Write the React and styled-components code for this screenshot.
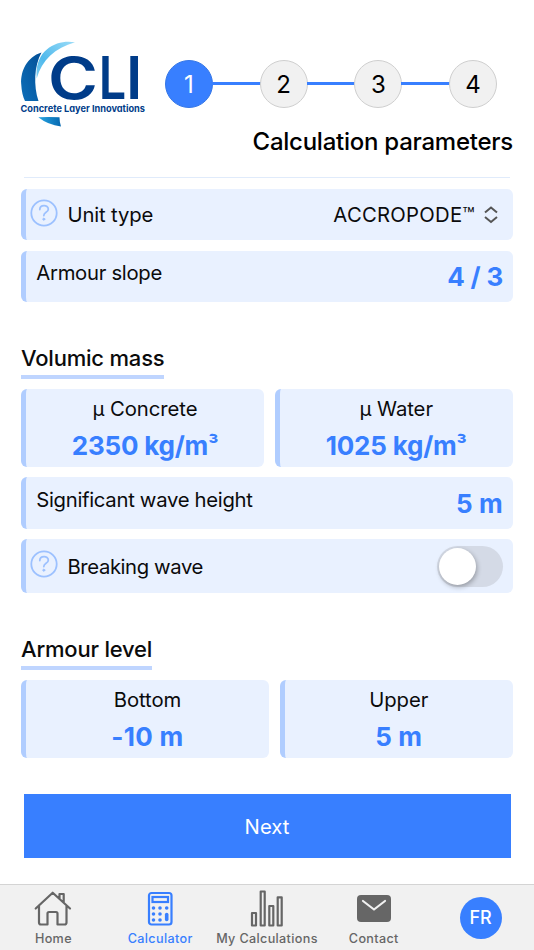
import React from "react";
import styled, { createGlobalStyle } from "styled-components";

const Global = createGlobalStyle`
  * { box-sizing: border-box; }
  body { margin: 0; background: #fff; font-family: Inter, "Liberation Sans", sans-serif; color: #0b0b0c; }
`;

const Screen = styled.div`
  width: 534px;
  height: 950px;
  display: flex;
  flex-direction: column;
  overflow: hidden;
  background: #fff;
`;

const Text = styled.span`
  font-size: ${(p) => p.$size || 20.3}px;
  font-weight: ${(p) => p.$weight || 400};
  letter-spacing: ${(p) => p.$track || 0}px;
  line-height: ${(p) => p.$line || 26}px;
  color: ${(p) => p.$color || "inherit"};
  white-space: nowrap;
`;

const Power = styled.span`
  font-size: 0.84em;
  line-height: 0;
  vertical-align: 3px;
`;

const Header = styled.header`
  height: 177px;
  flex: none;
  display: flex;
  padding: 40px 21px 0 20px;
`;

const Logo = styled.svg`
  width: 128px;
  height: 90px;
  flex: none;
`;

const LogoCaption = styled.text`
  font-size: 9.3px;
  font-weight: 700;
  font-feature-settings: "cv11";
`;

const HeaderMain = styled.div`
  flex: 1;
  display: flex;
  flex-direction: column;
  padding-top: 20px;
`;

const Steps = styled.div`
  display: flex;
  align-items: center;
  padding: 0 16px 0 17px;
`;

const StepDot = styled.div`
  width: 48px;
  height: 48px;
  flex: none;
  border-radius: 50%;
  display: flex;
  align-items: center;
  justify-content: center;
  font-size: 24px;
  color: ${(p) => (p.$active ? "#fff" : "#000")};
  background: ${(p) => (p.$active ? "#387fff" : "#f1f1f1")};
  border: 1px solid ${(p) => (p.$active ? "#3677e6" : "#cfcfcf")};
`;

const StepLine = styled.div`
  flex: 1;
  height: 3px;
  margin: 0 -1px 1px;
  background: #387fff;
`;

const PageTitle = styled.h1`
  margin: 18px 0 0;
  display: flex;
  justify-content: flex-end;
  font-weight: 500;
  color: #000;
`;

const Content = styled.main`
  flex: none;
  height: 707px;
  padding: 0 21px;
  display: flex;
  flex-direction: column;
`;

const ScrollEdge = styled.div`
  height: 1px;
  flex: none;
  margin: 0 3px 11px;
  background: #e0ebfb;
`;

const Panel = styled.div`
  display: flex;
  flex: none;
  align-items: center;
  justify-content: space-between;
  height: ${(p) => p.$height || 51.4}px;
  margin-bottom: 10.5px;
  padding: 0 10px 0 ${(p) => (p.$help ? 3.5 : 10.3)}px;
  border-left: 5px solid #b0cdff;
  border-radius: 6px;
  background: #e9f1ff;
`;

const Lead = styled.div`
  display: flex;
  align-items: center;
  gap: 10px;
  padding-bottom: ${(p) => p.$lift || 0}px;
`;

const HelpIcon = styled.svg`
  width: 28px;
  height: 28px;
  margin-top: -4px;
`;

const Select = styled.div`
  display: flex;
  align-items: center;
  gap: 8px;
  padding-right: 4px;
`;

const SectionTitle = styled.h2`
  align-self: flex-start;
  display: flex;
  flex: none;
  margin: 31.3px 0 10.4px;
  padding: 0 0 3px;
  border-bottom: 4px solid #bfd5ff;
  font-weight: 500;
`;

const Cards = styled.div`
  display: grid;
  flex: none;
  grid-template-columns: ${(p) => p.$cols};
  gap: 10.5px;
  margin-bottom: 10.2px;
`;

const Card = styled.div`
  height: 77.7px;
  padding-top: 6.5px;
  display: flex;
  flex-direction: column;
  align-items: center;
  border-left: 5px solid #b0cdff;
  border-radius: 6px;
  background: #e9f1ff;
`;

const Toggle = styled.div`
  width: 66px;
  height: 41px;
  padding: 2px;
  border-radius: 21px;
  background: #d4dae6;
`;

const Knob = styled.div`
  width: 37px;
  height: 37px;
  border-radius: 50%;
  background: #fff;
  box-shadow: 1px 2px 5px rgba(0, 0, 0, 0.3);
`;

const NextButton = styled.button`
  height: 64px;
  flex: none;
  margin: 26px 2.5px 0;
  padding: 1px 0 0;
  border: 0;
  background: #387fff;
  color: #fff;
  font-family: inherit;
`;

const TabBar = styled.nav`
  height: 66px;
  flex: none;
  display: grid;
  grid-template-columns: repeat(5, 1fr);
  border-top: 1px solid #d4d4d4;
  background: #f1f1f1;
`;

const Tab = styled.div`
  display: flex;
  flex-direction: column;
  align-items: center;
  padding-top: 5px;
  color: ${(p) => (p.$active ? "#387fff" : "#666")};
`;

const TabIcon = styled.svg`
  width: 40px;
  height: 40px;
  flex: none;
  fill: none;
  stroke: currentColor;
  stroke-width: 2.2;
  stroke-linejoin: round;
  stroke-linecap: round;
`;

const Avatar = styled.div`
  width: 42px;
  height: 42px;
  margin-top: 7px;
  border-radius: 50%;
  display: flex;
  align-items: center;
  justify-content: center;
  background: #387fff;
  color: #fff;
`;

function Brand() {
  return (
    <Logo viewBox="20 40 128 90" aria-label="CLI Concrete Layer Innovations">
      <defs>
        <linearGradient id="deep" x1="0" y1="1" x2="1" y2="0">
          <stop offset="0" stopColor="#0d6fb9" />
          <stop offset="1" stopColor="#034e96" />
        </linearGradient>
        <linearGradient id="pale" x1="0" y1="1" x2="1" y2="0">
          <stop offset="0" stopColor="#7fcdf2" />
          <stop offset=".35" stopColor="#4fb9ec" />
          <stop offset="1" stopColor="#9bdcf8" />
        </linearGradient>
        <linearGradient id="base">
          <stop offset="0" stopColor="#26a5e2" />
          <stop offset="1" stopColor="#0668b0" />
        </linearGradient>
      </defs>
      <path d="M41.5 52.5C27 57 20.5 71 21.2 84C21.5 91 23 97 25 101H38.5C33.500 86 34 66 41.5 52.5Z" fill="url(#deep)" />
      <path d="M75 42.3C58 39 34 49 36.700 78.500C42 60 55 48 75 42.300Z" fill="url(#pale)" />
      <path d="M38.300 117.300Q49 116.500 59.500 117.300Q59.500 122 61 126.500Q48 125 38.300 117.300Z" fill="url(#base)" />
      <g fill="#003c89" fontFamily="Inter, sans-serif" fontWeight="600">
        <text x="48" y="98.500" fontSize="58" textLength="50" lengthAdjust="spacingAndGlyphs">C</text>
        <text x="98.800" y="98.500" fontSize="59" textLength="27.500" lengthAdjust="spacingAndGlyphs">L</text>
        <text x="126" y="98.500" fontSize="59">I</text>
        <LogoCaption x="20.500" y="112.300" textLength="124.500" lengthAdjust="spacingAndGlyphs">Concrete Layer Innovations</LogoCaption>
      </g>
    </Logo>
  );
}

function Help() {
  return (
    <HelpIcon viewBox="0 0 28 28" fill="none" stroke="#9cc1ff" strokeWidth="1.800" strokeLinecap="round">
      <circle cx="14" cy="14" r="12.700" />
      <path d="M9.800 10.500C9.800 5.500 18.300 5.500 18.300 10.200C18.300 13.400 13.800 13.300 13.800 16.500" />
      <circle cx="13.800" cy="20.200" r="1" fill="#9cc1ff" strokeWidth="1" />
    </HelpIcon>
  );
}

function Value({ children, line, track = 0 }) {
  return <Text $size={26} $weight={700} $color="#387fff" $line={line} $track={track}>{children}</Text>;
}

function Stat({ label, children, track }) {
  return (
    <Card>
      <Text $track={-0.05}>{label}</Text>
      <Value line={47} track={track}>{children}</Value>
    </Card>
  );
}

function Section({ children }) {
  return (
    <SectionTitle>
      <Text $size={22} $weight={500} $line={28} $track={-0.2}>{children}</Text>
    </SectionTitle>
  );
}

function TabLabel({ children }) {
  return <Text $size={12.6} $weight={500} $line={18} $track={0.35}>{children}</Text>;
}

export default function App() {
  return (
    <Screen>
      <Global />
      <Header>
        <Brand />
        <HeaderMain>
          <Steps>
            {[1, 2, 3, 4].map((n) => (
              <React.Fragment key={n}>
                {n > 1 && <StepLine />}
                <StepDot $active={n === 1}>{n}</StepDot>
              </React.Fragment>
            ))}
          </Steps>
          <PageTitle>
            <Text $size={24} $weight={500} $line={32} $track={-0.25}>Calculation parameters</Text>
          </PageTitle>
        </HeaderMain>
      </Header>

      <Content>
        <ScrollEdge />
        <Panel $help>
          <Lead><Help /><Text $track={-0.15}>Unit type</Text></Lead>
          <Select>
            <Text $track={0.25}>ACCROPODE™</Text>
            <svg width="16" height="18" viewBox="0 0 16 18" fill="none" stroke="#555" strokeWidth="2">
              <path d="M2 6.500L8 1.500L14 6.500M2 11L8 16L14 11" />
            </svg>
          </Select>
        </Panel>
        <Panel>
          <Lead $lift={7}><Text $track={-0.3}>Armour slope</Text></Lead>
          <Value track={-0.2}>4 / 3</Value>
        </Panel>

        <Section>Volumic mass</Section>
        <Cards $cols="243px 1fr">
          <Stat label="µ Concrete" track={-0.2}>2350 kg/m<Power>³</Power></Stat>
          <Stat label="µ Water" track={-0.2}>1025 kg/m<Power>³</Power></Stat>
        </Cards>
        <Panel>
          <Lead $lift={6}><Text $track={-0.3}>Significant wave height</Text></Lead>
          <Value track={0.2} line={27}>5 m</Value>
        </Panel>
        <Panel $help $height={54}>
          <Lead><Help /><Text $track={-0.4} $line={27}>Breaking wave</Text></Lead>
          <Toggle><Knob /></Toggle>
        </Panel>

        <Section>Armour level</Section>
        <Cards $cols="248px 1fr">
          <Stat label="Bottom" track={0.3}>-10 m</Stat>
          <Stat label="Upper" track={0.2}>5 m</Stat>
        </Cards>
        <NextButton><Text>Next</Text></NextButton>
      </Content>

      <TabBar>
        <Tab>
          <TabIcon viewBox="0 0 40 40">
            <path d="M2.700 18.500L19.700 2.700L37 18.500M6 16V32.500Q6 34.500 8 34.500H14.500V23.500Q14.500 22 16 22H23Q24.500 22 24.500 23.500V34.500H31.500Q33.500 34.500 33.500 32.500V16M26.500 8.500V4H30.700V12.500" />
          </TabIcon>
          <TabLabel>Home</TabLabel>
        </Tab>
        <Tab $active>
          <TabIcon viewBox="0 0 40 40">
            <rect x="9" y="3" width="22.500" height="31.500" rx="2.500" />
            <rect x="12.500" y="7" width="15.500" height="5" strokeLinejoin="miter" />
            <path d="M13.500 18h.01M20 18h.01M26.700 18h.01M13.500 24h.01M20 24h.01M13.500 30h.01M20 30h.01" strokeWidth="3.600" />
            <path d="M26.700 24.500V29.500" strokeWidth="3.600" />
          </TabIcon>
          <TabLabel>Calculator</TabLabel>
        </Tab>
        <Tab>
          <TabIcon viewBox="0 0 40 40">
            <path d="M5 23h4v12.500h-4zM13.700 1.500h4v34h-4zM22.300 16h4v19.500h-4zM30.700 7.300h4v28.200h-4z" />
          </TabIcon>
          <TabLabel>My Calculations</TabLabel>
        </Tab>
        <Tab>
          <TabIcon viewBox="0 0 40 40">
            <rect x="3" y="5" width="34" height="27" rx="4" fill="currentColor" stroke="none" />
            <path d="M9 11L20 19.500L31 11" stroke="#f1f1f1" />
          </TabIcon>
          <TabLabel>Contact</TabLabel>
        </Tab>
        <Tab>
          <Avatar><Text $size={18} $weight={500}>FR</Text></Avatar>
        </Tab>
      </TabBar>
    </Screen>
  );
}
